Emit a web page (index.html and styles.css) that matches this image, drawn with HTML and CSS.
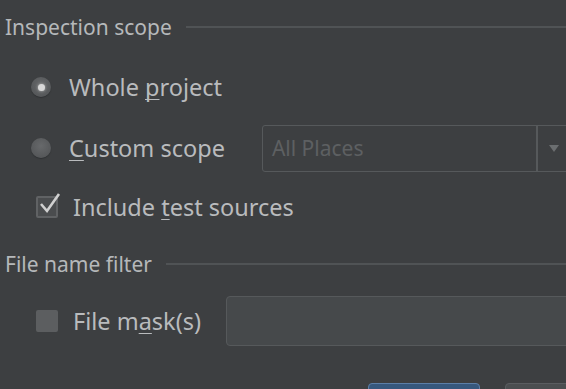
FILE: index.html
```html
<!DOCTYPE html>
<html lang="en">

<head>
    <meta charset="UTF-8">
    <meta name="viewport" content="width=device-width, initial-scale=1.0">
    <title>Inspection Scope</title>
    <link rel="stylesheet" href="styles.css">
</head>

<body>
    <div class="dialog">
        <div class="group-title">
            <span>Inspection scope</span>
            <div class="rule"></div>
        </div>

        <div class="row row-whole">
            <span class="radio selected"></span>
            <span class="label">Whole <u>p</u>roject</span>
        </div>

        <div class="row row-custom">
            <span class="radio"></span>
            <span class="label"><u>C</u>ustom scope</span>
            <div class="combo">
                <span class="combo-text">All Places</span>
                <span class="combo-arrow"></span>
            </div>
        </div>

        <div class="row row-tests">
            <span class="check checked">
                <svg width="26" height="26" viewBox="0 0 26 26">
                    <path d="M4 13 L10 20 L22 3" fill="none" stroke="#d0d0d0" stroke-width="2.6" />
                </svg>
            </span>
            <span class="label">Include <u>t</u>est sources</span>
        </div>

        <div class="group-title second">
            <span>File name filter</span>
            <div class="rule"></div>
        </div>

        <div class="row row-mask">
            <span class="check"></span>
            <span class="label">File m<u>a</u>sk(s)</span>
            <div class="text-field"></div>
        </div>

        <div class="footer">
            <button class="btn primary"></button>
            <button class="btn"></button>
        </div>
    </div>
</body>

</html>
```

FILE: styles.css
```css
* {
    margin: 0;
    padding: 0;
    box-sizing: border-box;
}

body {
    background-color: #3d3f41;
    color: #b9bbbd;
    font-family: "Noto Sans", "Open Sans", sans-serif;
}

.dialog {
    width: 566px;
    height: 389px;
    overflow: hidden;
}

.group-title {
    height: 54px;
    display: flex;
    align-items: center;
    padding-left: 5px;
    font-size: 21px;
    color: #b5b8ba;
}

.group-title .rule {
    flex: 1;
    height: 2px;
    margin-left: 14px;
    background-color: #505355;
}

.group-title.second {
    height: 52px;
}

.row {
    display: flex;
    align-items: center;
    padding-left: 31px;
    font-size: 23.5px;
}

.row-whole {
    height: 66px;
}

.row-custom {
    height: 56px;
}

.row-tests {
    height: 62px;
    padding-left: 36px;
}

.row-mask {
    height: 62px;
    padding-left: 36px;
}

.radio {
    flex: none;
    width: 20px;
    height: 20px;
    border-radius: 50%;
    background: radial-gradient(circle at 50% 40%, #67696b, #4f5153);
    box-shadow: 0 1px 1px #2f3133;
    display: flex;
    align-items: center;
    justify-content: center;
}

.radio.selected::after {
    content: "";
    width: 7px;
    height: 7px;
    border-radius: 50%;
    background-color: #d8d8d8;
    box-shadow: 0 0 3px #bbb;
}

.row .radio + .label {
    margin-left: 18px;
}

.check {
    flex: none;
    width: 22px;
    height: 22px;
    border: 2px solid #606264;
    background-color: #4a4c4e;
    border-radius: 2px;
    position: relative;
}

.check svg {
    position: absolute;
    left: -1px;
    top: -7px;
}

.check + .label {
    margin-left: 15px;
}

.row-mask .check {
    background-color: #5c5e60;
    border-color: #5c5e60;
}

.label {
    white-space: nowrap;
}

.label u {
    text-decoration-thickness: 1px;
    text-underline-offset: 3px;
    text-decoration-skip-ink: none;
}

.combo {
    flex: none;
    width: 330px;
    height: 47px;
    margin-left: 37px;
    border: 1px solid #56595b;
    border-radius: 3px;
    display: flex;
    align-items: center;
}

.combo-text {
    width: 275px;
    padding-left: 9px;
    height: 100%;
    display: flex;
    align-items: center;
    font-size: 21px;
    color: #5d6062;
    border-right: 2px solid #56595b;
}

.combo-arrow {
    width: 32px;
    display: flex;
    justify-content: center;
}

.combo-arrow::after {
    content: "";
    border-left: 5px solid transparent;
    border-right: 5px solid transparent;
    border-top: 7px solid #6b6e70;
}

.text-field {
    flex: none;
    width: 360px;
    height: 50px;
    margin-left: 25px;
    background-color: #46494b;
    border: 1px solid #56595b;
    border-radius: 4px;
}

.footer {
    display: flex;
    padding-top: 31px;
    padding-left: 368px;
    gap: 25px;
}

.btn {
    flex: none;
    width: 112px;
    height: 30px;
    border: 1px solid #5a5d60;
    border-radius: 4px;
    background-color: #4b4e50;
}

.btn.primary {
    border-color: #5c7fa8;
    background-color: #37587d;
}
```
